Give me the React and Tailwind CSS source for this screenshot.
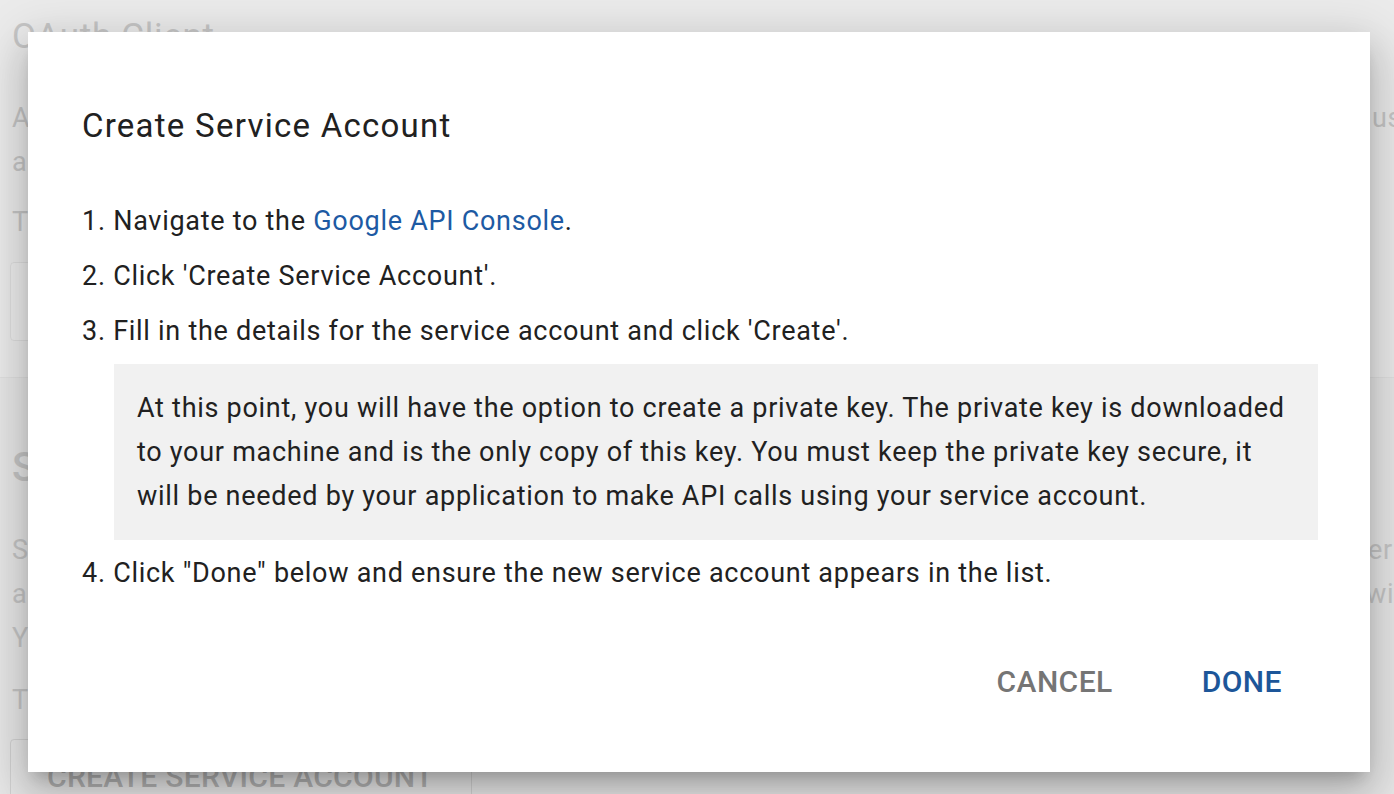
export default function App() {
  return (
    <div className="relative w-[1394px] h-[794px] overflow-hidden bg-[#ebebeb] font-['Roboto',sans-serif] tracking-[0.045em]">
      {/* Background page (dimmed) */}
      <div className="px-[12px] text-[#c6c6c6]">
        <h1 className="pt-[17px] text-[35px] leading-[40px] tracking-[0.02em]">OAuth Client</h1>
        <div className="mt-[39px] text-[27px] leading-[44px]">
          <div className="flex whitespace-nowrap">
            <span className="w-[1360px] shrink-0 overflow-hidden">An OAuth client ID lets your application request access to user data</span>
            <span>using</span>
          </div>
          <div className="whitespace-nowrap">and act on behalf of the user.</div>
        </div>
        <div className="mt-[16px] text-[27px] leading-[44px]">To create a new client, select an application type.</div>
        <div className="-ml-[2px] mt-[18px] h-[79px] w-[620px] rounded-[4px] border border-[#dedede] bg-[#ededed]"></div>
      </div>
      <div className="mt-[36px] border-t border-[#e0e0e0] bg-[#e7e7e7] px-[12px] pb-[40px] text-[#c6c6c6]">
        <h2 className="mt-[66px] text-[40px] font-medium leading-[48px]">Service Accounts</h2>
        <div className="mt-[36px] text-[27px] leading-[44px]">
          <div className="flex whitespace-nowrap">
            <span className="w-[1356px] shrink-0 overflow-hidden">Service accounts let your application call Google APIs on its own behalf, rather than on behalf of a user</span>
            <span>er</span>
          </div>
          <div className="flex whitespace-nowrap">
            <span className="w-[1354px] shrink-0 overflow-hidden">account credentials are used by the server to authenticate requests. The private key</span>
            <span>will</span>
          </div>
          <div className="whitespace-nowrap">You can create as many service accounts as you need.</div>
        </div>
        <div className="mt-[18px] text-[27px] leading-[44px]">To create a service account, click the button below.</div>
        <div className="-ml-[2px] mt-[17px] h-[60px] w-[462px] rounded-[4px] border border-[#d2d2d2] pl-[36px] pt-[21px]">
          <span className="whitespace-nowrap text-[30px] font-medium leading-[32px] tracking-[0.01em] text-[#b2b2b2]">CREATE SERVICE ACCOUNT</span>
        </div>
      </div>

      {/* Dialog */}
      <div className="absolute left-[28px] top-[32px] h-[740px] w-[1342px] bg-white pl-[54px] pr-[52px] pt-[74px] shadow-[0_24px_38px_3px_rgba(0,0,0,0.14),0_9px_46px_8px_rgba(0,0,0,0.12),0_11px_15px_-7px_rgba(0,0,0,0.2)]">
        <h3 className="text-[33px] leading-[40px] tracking-[0.038em] text-[#212121]">Create Service Account</h3>
        <div className="mt-[53px] flex flex-col gap-[11px] text-[27px] leading-[44px] text-[#212121]">
          <div>
            1. Navigate to the <span className="text-[#1d5aa3]">Google API Console</span>.
          </div>
          <div>2. Click 'Create Service Account'.</div>
          <div>3. Fill in the details for the service account and click 'Create'.</div>
          <div className="ml-[32px] bg-[#f1f1f1] px-[23px] py-[22px]">
            At this point, you will have the option to create a private key. The private key is downloaded to your machine and is the only copy of this key. You must keep the private key secure, it will be needed by your application to make API calls using your service account.
          </div>
          <div>4. Click "Done" below and ensure the new service account appears in the list.</div>
        </div>
        <div className="mt-[69px] flex justify-end gap-[89px] pr-[36px] text-[30px] font-medium leading-[36px] tracking-[0.015em]">
          <button className="text-[#757575]">CANCEL</button>
          <button className="text-[#1d5699]">DONE</button>
        </div>
      </div>
    </div>
  );
}
